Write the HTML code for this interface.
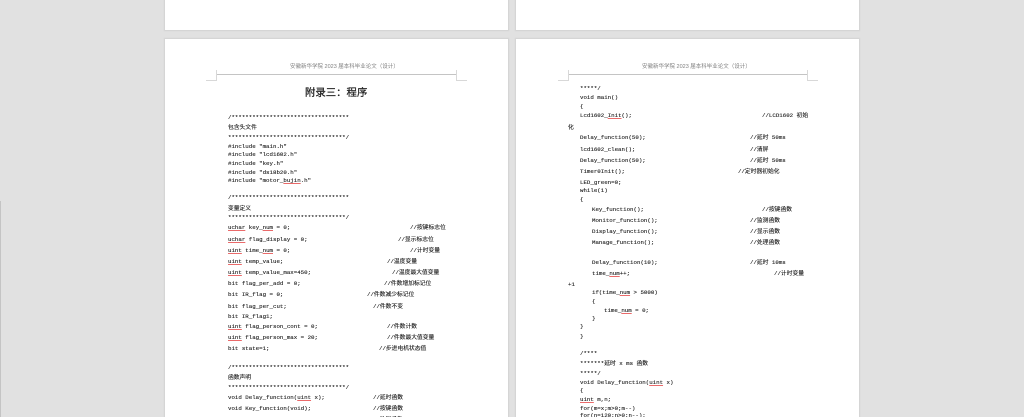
<!DOCTYPE html>
<html lang="zh"><head><meta charset="utf-8"><title>附录三：程序</title>
<style>
html,body{margin:0;padding:0;height:417px;overflow:hidden}
body{width:1024px;position:relative;background:#e1e1e1;font-family:"Liberation Mono","Noto Sans CJK SC",monospace;font-size:5.77px;line-height:8px;color:#1c1c1c;-webkit-text-stroke:.12px #1c1c1c}
.pg{position:absolute;background:#fff;box-shadow:0 0 1px 1px #d2d2d2}
p{position:absolute;margin:0;white-space:pre;height:8px}
.h{font-family:"Liberation Sans","Noto Sans CJK SC",sans-serif;font-size:5.5px;color:#808080;-webkit-text-stroke:0}
.t{font-family:"Liberation Sans","Noto Sans CJK SC",sans-serif;font-size:10.4px;line-height:14px;height:14px;font-weight:400;color:#222;-webkit-text-stroke:.25px #222}
u{text-decoration:underline solid #ea6a6a;text-decoration-thickness:.7px;text-underline-offset:1px}
.l{position:absolute;background:#c4c4c4}
#txt{position:absolute;left:0;top:1px;width:1024px;height:416px;overflow:hidden;filter:blur(.3px)}
</style></head><body>
<div class="l" style="left:0;top:201px;width:1px;height:216px"></div>
<div class="pg" style="left:165px;top:-5px;width:343px;height:35px"></div>
<div class="pg" style="left:516px;top:-5px;width:343px;height:35px"></div>
<div class="pg" style="left:165px;top:39px;width:343px;height:378px"></div>
<div class="pg" style="left:516px;top:39px;width:343px;height:378px"></div>

<div class="l" style="left:216px;top:74px;width:241px;height:1px"></div>
<div class="l" style="left:216px;top:70px;width:1px;height:11px;background:#d8d8d8"></div>
<div class="l" style="left:206px;top:80px;width:10px;height:1px;background:#d8d8d8"></div>
<div class="l" style="left:456px;top:70px;width:1px;height:11px;background:#d8d8d8"></div>
<div class="l" style="left:457px;top:80px;width:10px;height:1px;background:#d8d8d8"></div>

<div class="l" style="left:568px;top:74px;width:240px;height:1px"></div>
<div class="l" style="left:568px;top:70px;width:1px;height:11px;background:#d8d8d8"></div>
<div class="l" style="left:558px;top:80px;width:10px;height:1px;background:#d8d8d8"></div>
<div class="l" style="left:807px;top:70px;width:1px;height:11px;background:#d8d8d8"></div>
<div class="l" style="left:808px;top:80px;width:10px;height:1px;background:#d8d8d8"></div>

<div id="txt">
<p class="h" style="left:290px;top:62px">安徽新华学院 2023 届本科毕业论文（设计）</p>
<p class="h" style="left:642px;top:62px">安徽新华学院 2023 届本科毕业论文（设计）</p>
<p class="t" style="left:305px;top:86px">附录三：程序</p>

<p style="left:228px;top:113px">/**********************************</p>
<p style="left:228px;top:123px">包含头文件</p>
<p style="left:228px;top:133px">**********************************/</p>
<p style="left:228px;top:142px">#include "main.h"</p>
<p style="left:228px;top:150px">#include "lcd1602.h"</p>
<p style="left:228px;top:159px">#include "key.h"</p>
<p style="left:228px;top:168px">#include "ds18b20.h"</p>
<p style="left:228px;top:176px">#include "motor_<u>bujin</u>.h"</p>
<p style="left:228px;top:193px">/**********************************</p>
<p style="left:228px;top:204px">变量定义</p>
<p style="left:228px;top:213px">**********************************/</p>
<p style="left:228px;top:223px"><u>uchar</u> key_<u>num</u> = 0;</p><p style="left:410px;top:223px">//按键标志位</p>
<p style="left:228px;top:235px"><u>uchar</u> flag_display = 0;</p><p style="left:398px;top:235px">//显示标志位</p>
<p style="left:228px;top:246px"><u>uint</u> time_<u>num</u> = 0;</p><p style="left:410px;top:246px">//计时变量</p>
<p style="left:228px;top:257px"><u>uint</u> temp_value;</p><p style="left:387px;top:257px">//温度变量</p>
<p style="left:228px;top:268px"><u>uint</u> temp_value_max=450;</p><p style="left:392px;top:268px">//温度最大值变量</p>
<p style="left:228px;top:279px">bit flag_per_add = 0;</p><p style="left:384px;top:279px">//件数增加标记位</p>
<p style="left:228px;top:290px">bit IR_flag = 0;</p><p style="left:367px;top:290px">//件数减少标记位</p>
<p style="left:228px;top:302px">bit flag_per_cut;</p><p style="left:373px;top:302px">//件数不变</p>
<p style="left:228px;top:312px">bit IR_flag1;</p>
<p style="left:228px;top:322px"><u>uint</u> flag_person_cont = 0;</p><p style="left:387px;top:322px">//件数计数</p>
<p style="left:228px;top:333px"><u>uint</u> flag_person_max = 20;</p><p style="left:387px;top:333px">//件数最大值变量</p>
<p style="left:228px;top:344px">bit state=1;</p><p style="left:379px;top:344px">//步进电机状态值</p>
<p style="left:228px;top:363px">/**********************************</p>
<p style="left:228px;top:373px">函数声明</p>
<p style="left:228px;top:383px">**********************************/</p>
<p style="left:228px;top:393px">void Delay_function(<u>uint</u> x);</p><p style="left:373px;top:393px">//延时函数</p>
<p style="left:228px;top:404px">void Key_function(void);</p><p style="left:373px;top:404px">//按键函数</p>
<p style="left:228px;top:415px">void Monitor_function(void);</p><p style="left:373px;top:415px">//监测函数</p>

<p style="left:580px;top:84px">*****/</p>
<p style="left:580px;top:93px">void main()</p>
<p style="left:580px;top:102px">{</p>
<p style="left:580px;top:111px">Lcd1602_<u>Init</u>();</p><p style="left:762px;top:111px">//LCD1602 初始</p>
<p style="left:568px;top:123px">化</p>
<p style="left:580px;top:133px">Delay_function(50);</p><p style="left:750px;top:133px">//延时 50ms</p>
<p style="left:580px;top:145px">lcd1602_clean();</p><p style="left:750px;top:145px">//清屏</p>
<p style="left:580px;top:156px">Delay_function(50);</p><p style="left:750px;top:156px">//延时 50ms</p>
<p style="left:580px;top:167px">Timer0Init();</p><p style="left:738px;top:167px">//定时器初始化</p>
<p style="left:580px;top:178px">LED_green=0;</p>
<p style="left:580px;top:186px">while(1)</p>
<p style="left:580px;top:195px">{</p>
<p style="left:592px;top:205px">Key_function();</p><p style="left:762px;top:205px">//按键函数</p>
<p style="left:592px;top:216px">Monitor_function();</p><p style="left:750px;top:216px">//监测函数</p>
<p style="left:592px;top:227px">Display_function();</p><p style="left:750px;top:227px">//显示函数</p>
<p style="left:592px;top:238px">Manage_function();</p><p style="left:750px;top:238px">//处理函数</p>
<p style="left:592px;top:258px">Delay_function(10);</p><p style="left:750px;top:258px">//延时 10ms</p>
<p style="left:592px;top:269px">time_<u>num</u>++;</p><p style="left:774px;top:269px">//计时变量</p>
<p style="left:568px;top:280px">+1</p>
<p style="left:592px;top:288px">if(time_<u>num</u> &gt; 5000)</p>
<p style="left:592px;top:297px">{</p>
<p style="left:604px;top:306px">time_<u>num</u> = 0;</p>
<p style="left:592px;top:314px">}</p>
<p style="left:580px;top:322px">}</p>
<p style="left:580px;top:332px">}</p>
<p style="left:580px;top:349px">/****</p>
<p style="left:580px;top:359px">*******延时 x ms 函数</p>
<p style="left:580px;top:369px">*****/</p>
<p style="left:580px;top:378px">void Delay_function(<u>uint</u> x)</p>
<p style="left:580px;top:386px">{</p>
<p style="left:580px;top:395px"><u>uint</u> m,n;</p>
<p style="left:580px;top:404px">for(m=x;m&gt;0;m--)</p>
<p style="left:580px;top:411px">for(n=120;n&gt;0;n--);</p>
</div>
</body></html>
